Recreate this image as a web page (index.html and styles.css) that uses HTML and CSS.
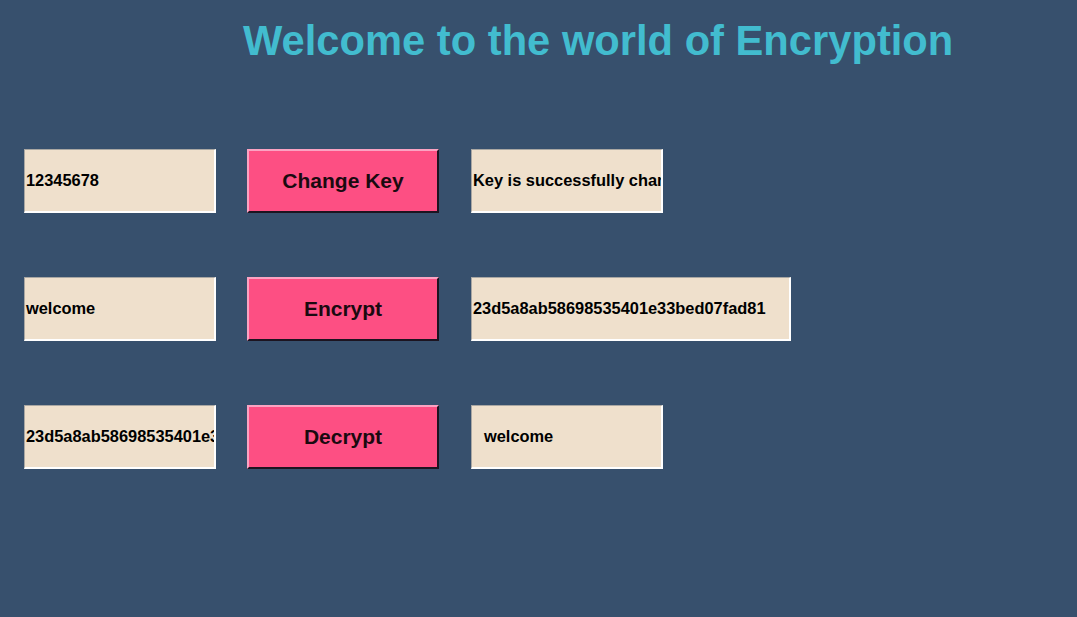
FILE: index.html
```html
<!DOCTYPE html>
<html>
<head>
<meta charset="utf-8">
<link rel="stylesheet" href="styles.css">
</head>
<body>
<div class="app">
  <h1 class="title">Welcome to the world of Encryption</h1>
  <div class="grid">
    <div class="entry">12345678</div>
    <div class="btn">Change Key</div>
    <div class="entry">Key is successfully changed</div>

    <div class="entry">welcome</div>
    <div class="btn">Encrypt</div>
    <div class="entry wide">23d5a8ab58698535401e33bed07fad81</div>

    <div class="entry">23d5a8ab58698535401e33bed07fad81</div>
    <div class="btn">Decrypt</div>
    <div class="entry inset">welcome</div>
  </div>
</div>
</body>
</html>
```
FILE: styles.css
```css
html, body {
  margin: 0;
  padding: 0;
  background: #37506d;
  width: 1077px;
  height: 617px;
  overflow: hidden;
}
.app {
  font-family: "Liberation Sans", Arial, sans-serif;
  font-weight: bold;
}
.title {
  margin: 0;
  padding: 17px 0 0 243px;
  font-size: 41.7px;
  line-height: 48px;
  color: #42bccf;
  font-weight: bold;
  white-space: nowrap;
}
.grid {
  display: grid;
  grid-template-columns: 192px 193px auto;
  grid-auto-rows: 64px;
  column-gap: 31px;
  row-gap: 64px;
  margin: 84px 0 0 24px;
  justify-items: start;
}
.entry {
  box-sizing: border-box;
  width: 192px;
  height: 64px;
  background: #efe0cc;
  border-top: 1px solid #a9a7a3;
  border-left: 1px solid #a9a7a3;
  border-right: 2px solid #ffffff;
  border-bottom: 2px solid #ffffff;
  font-size: 16.4px;
  color: #000;
  display: flex;
  align-items: center;
  padding-left: 1px;
  white-space: nowrap;
  overflow: hidden;
}
.entry.wide {
  width: 320px;
}
.entry.inset {
  padding-left: 12px;
}
.btn {
  box-sizing: border-box;
  width: 192px;
  height: 64px;
  background: #fd4f83;
  border-top: 2px solid #fba3c2;
  border-left: 2px solid #fba3c2;
  border-right: 2px solid #1c1420;
  border-bottom: 2px solid #1c1420;
  font-size: 21px;
  color: #1a0a10;
  display: flex;
  align-items: center;
  justify-content: center;
  white-space: nowrap;
}
```
